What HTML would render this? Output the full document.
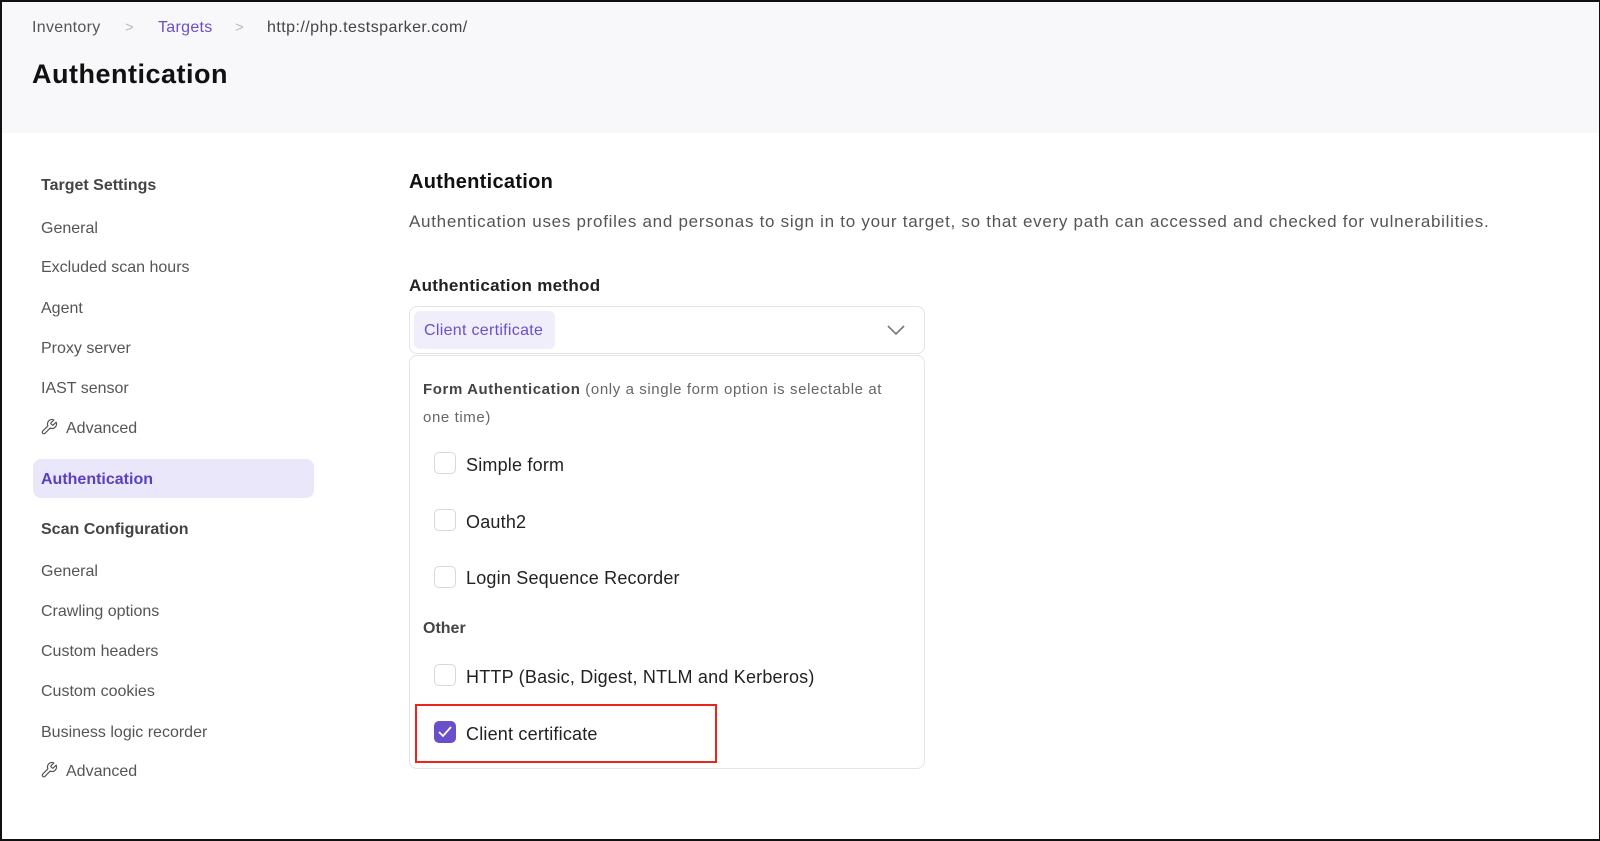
<!DOCTYPE html>
<html><head><meta charset="utf-8"><style>
*{margin:0;padding:0;box-sizing:border-box}
body{width:1600px;height:841px;overflow:hidden;background:#fff;font-family:"Liberation Sans",Arial,sans-serif;position:relative}
.frame{position:absolute;left:0;top:0;width:1600px;height:841px;border:2px solid #111;border-right-width:1px}
.hdr{position:absolute;left:2px;top:2px;right:1px;height:131px;background:#f8f8fa}
.t{position:absolute;white-space:nowrap;line-height:1}
.side{color:#555;font-size:16px}
.cb{position:absolute;left:434px;width:22px;height:22px;border:1.5px solid #d8d8dc;border-radius:5px;background:#fff}
.opt{position:absolute;left:466px;font-size:18px;color:#222;white-space:nowrap;line-height:1;letter-spacing:0.2px}
</style></head><body>
<div class="hdr"></div>
<div class="t" style="left:32px;top:20px;font-size:16px;color:#555;letter-spacing:0.3px">Inventory</div>
<div class="t" style="left:125px;top:20px;font-size:15px;color:#bbb">&gt;</div>
<div class="t" style="left:158px;top:20px;font-size:16px;color:#6a4fc8;letter-spacing:0.3px">Targets</div>
<div class="t" style="left:235px;top:20px;font-size:15px;color:#bbb">&gt;</div>
<div class="t" style="left:267px;top:20px;font-size:16px;color:#444;letter-spacing:0.45px">http://php.testsparker.com/</div>
<div class="t" style="left:32px;top:61px;font-size:27px;font-weight:bold;color:#111;letter-spacing:0.5px">Authentication</div>

<div class="t" style="left:41px;top:178px;font-size:16px;font-weight:bold;color:#444">Target Settings</div>
<div class="t side" style="left:41px;top:221px">General</div>
<div class="t side" style="left:41px;top:260px">Excluded scan hours</div>
<div class="t side" style="left:41px;top:301px">Agent</div>
<div class="t side" style="left:41px;top:341px">Proxy server</div>
<div class="t side" style="left:41px;top:381px">IAST sensor</div>
<svg style="position:absolute;left:40px;top:418px" width="18" height="18" viewBox="0 0 24 24" fill="none" stroke="#555" stroke-width="1.6" stroke-linecap="round" stroke-linejoin="round"><path d="M14.7 6.3a1 1 0 0 0 0 1.4l1.6 1.6a1 1 0 0 0 1.4 0l3.77-3.77a6 6 0 0 1-7.94 7.94l-6.91 6.91a2.12 2.12 0 0 1-3-3l6.91-6.91a6 6 0 0 1 7.94-7.94l-3.76 3.76z"/></svg>
<div class="t side" style="left:66px;top:421px">Advanced</div>
<div style="position:absolute;left:33px;top:459px;width:281px;height:39px;background:#ebe7fa;border-radius:8px"></div>
<div class="t" style="left:41px;top:472px;font-size:16px;font-weight:bold;color:#5a3fc0">Authentication</div>
<div class="t" style="left:41px;top:522px;font-size:16px;font-weight:bold;color:#444">Scan Configuration</div>
<div class="t side" style="left:41px;top:564px">General</div>
<div class="t side" style="left:41px;top:604px">Crawling options</div>
<div class="t side" style="left:41px;top:644px">Custom headers</div>
<div class="t side" style="left:41px;top:684px">Custom cookies</div>
<div class="t side" style="left:41px;top:725px">Business logic recorder</div>
<svg style="position:absolute;left:40px;top:761px" width="18" height="18" viewBox="0 0 24 24" fill="none" stroke="#555" stroke-width="1.6" stroke-linecap="round" stroke-linejoin="round"><path d="M14.7 6.3a1 1 0 0 0 0 1.4l1.6 1.6a1 1 0 0 0 1.4 0l3.77-3.77a6 6 0 0 1-7.94 7.94l-6.91 6.91a2.12 2.12 0 0 1-3-3l6.91-6.91a6 6 0 0 1 7.94-7.94l-3.76 3.76z"/></svg>
<div class="t side" style="left:66px;top:764px">Advanced</div>

<div class="t" style="left:409px;top:172px;font-size:20px;font-weight:bold;color:#111;letter-spacing:0.3px">Authentication</div>
<div class="t" style="left:409px;top:213px;font-size:17px;color:#555;letter-spacing:0.72px">Authentication uses profiles and personas to sign in to your target, so that every path can accessed and checked for vulnerabilities.</div>
<div class="t" style="left:409px;top:277px;font-size:17px;font-weight:bold;color:#222;letter-spacing:0.3px">Authentication method</div>

<div style="position:absolute;left:409px;top:306px;width:516px;height:48px;border:1px solid #e4e4e8;border-radius:8px"></div>
<div style="position:absolute;left:414px;top:311px;width:141px;height:38px;background:#f1eefc;border-radius:6px"></div>
<div class="t" style="left:424px;top:323px;font-size:16px;color:#6a4fc8;letter-spacing:0.3px">Client certificate</div>
<svg style="position:absolute;left:887px;top:324px" width="18" height="12" viewBox="0 0 18 12" fill="none" stroke="#777" stroke-width="1.6"><path d="M1 2l8 8 8-8"/></svg>

<div style="position:absolute;left:409px;top:355px;width:516px;height:414px;border:1px solid #e4e4e8;border-radius:8px"></div>
<div class="t" style="left:423px;top:382px;font-size:15px;color:#666;letter-spacing:0.6px"><b style="color:#444">Form Authentication</b> (only a single form option is selectable at</div>
<div class="t" style="left:423px;top:410px;font-size:15px;color:#666;letter-spacing:0.6px">one time)</div>
<div class="cb" style="top:452px"></div><div class="opt" style="top:456px">Simple form</div>
<div class="cb" style="top:509px"></div><div class="opt" style="top:513px">Oauth2</div>
<div class="cb" style="top:566px"></div><div class="opt" style="top:569px">Login Sequence Recorder</div>
<div class="t" style="left:423px;top:621px;font-size:16px;font-weight:bold;color:#444">Other</div>
<div class="cb" style="top:664px"></div><div class="opt" style="top:668px">HTTP (Basic, Digest, NTLM and Kerberos)</div>
<div class="cb" style="top:721px;background:#6a4fc8;border-color:#6a4fc8"><svg width="19" height="19" viewBox="0 0 19 19" fill="none" stroke="#fff" stroke-width="1.8"><path d="M4 10l4 4 8-9"/></svg></div>
<div class="opt" style="top:725px">Client certificate</div>
<div style="position:absolute;left:415px;top:704px;width:302px;height:59px;border:2px solid #e8261c"></div>
<div class="frame"></div>
</body></html>
